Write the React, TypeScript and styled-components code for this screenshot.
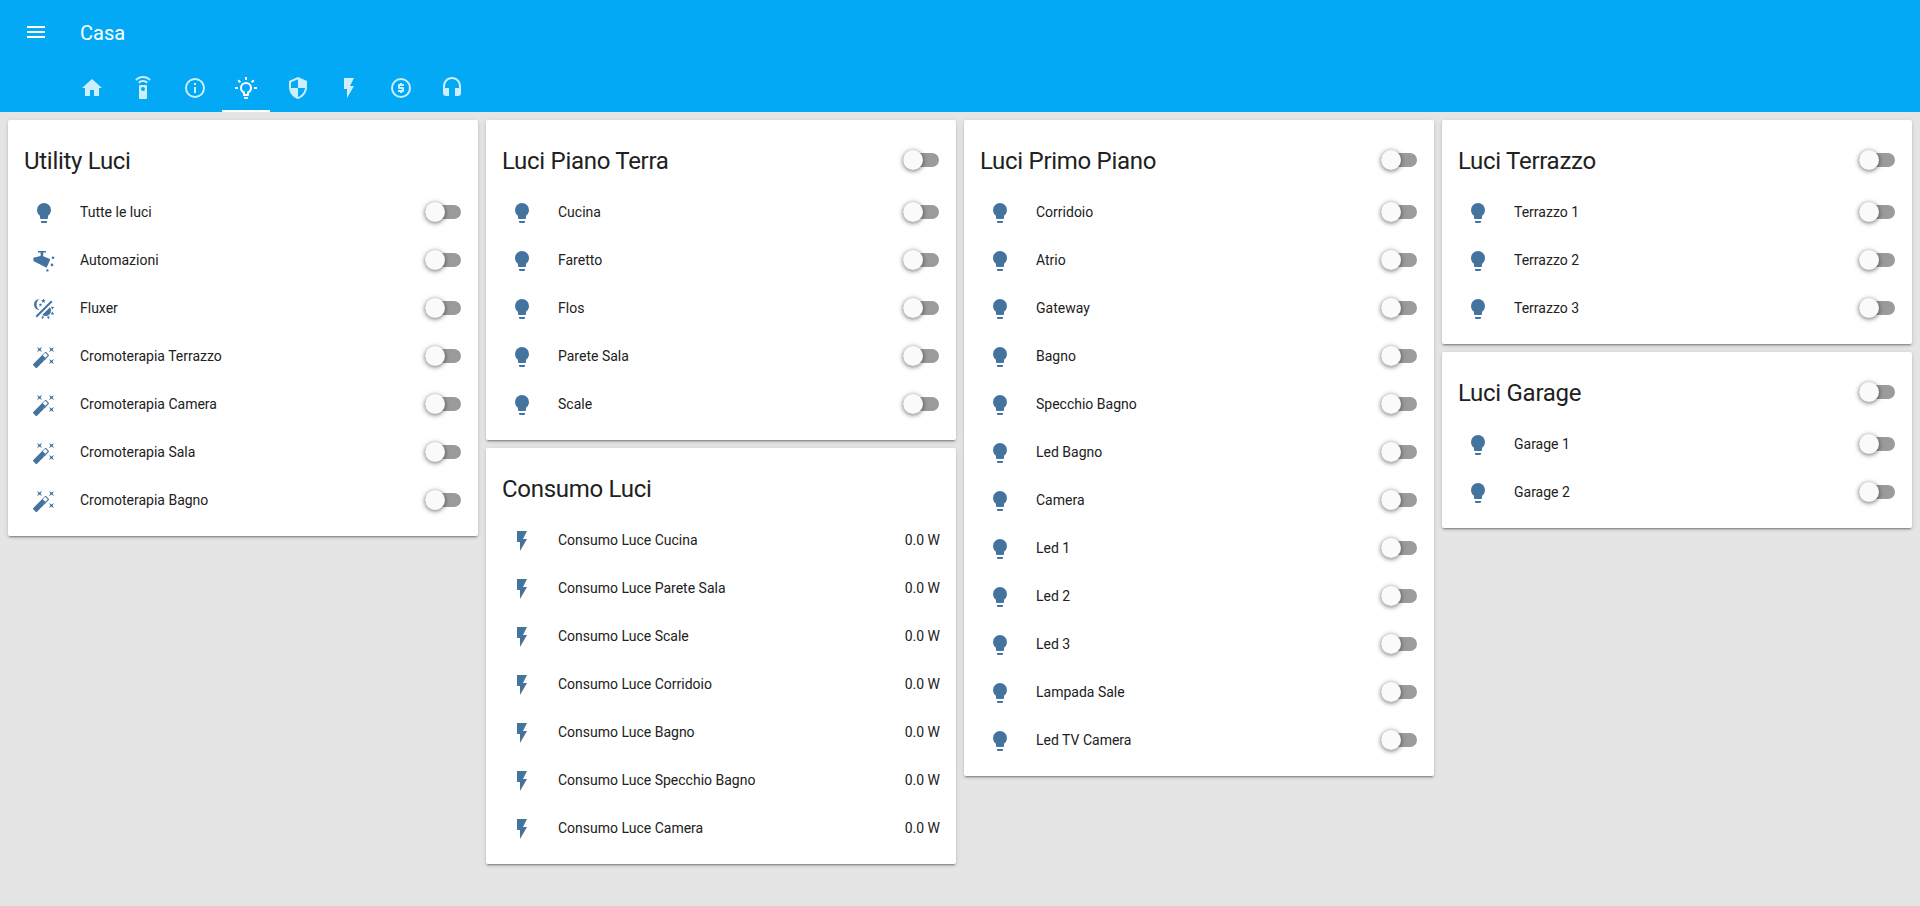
import React from "react";
import styled, { createGlobalStyle } from "styled-components";

const ICONS = {
    menu: "M3,6H21V8H3V6M3,11H21V13H3V11M3,16H21V18H3V16Z",
    home: "M10,20V14H14V20H19V12H22L12,3L2,12H5V20H10Z",
    remote: "M12,0C8.96,0 6.21,1.23 4.22,3.22L5.63,4.63C7.26,3 9.5,2 12,2C14.5,2 16.74,3 18.36,4.64L19.77,3.23C17.79,1.23 15.04,0 12,0M7.05,6.05L8.46,7.46C9.37,6.56 10.62,6 12,6C13.38,6 14.63,6.56 15.54,7.46L16.95,6.05C15.68,4.78 13.93,4 12,4C10.07,4 8.32,4.78 7.05,6.05M12,15A2,2 0 0,1 10,13A2,2 0 0,1 12,11A2,2 0 0,1 14,13A2,2 0 0,1 12,15M15,9H9A1,1 0 0,0 8,10V22A1,1 0 0,0 9,23H15A1,1 0 0,0 16,22V10A1,1 0 0,0 15,9Z",
    info: "M11,9H13V7H11M12,20C7.59,20 4,16.41 4,12C4,7.59 7.59,4 12,4C16.41,4 20,7.59 20,12C20,16.41 16.41,20 12,20M12,2A10,10 0 0,0 2,12A10,10 0 0,0 12,22A10,10 0 0,0 22,12A10,10 0 0,0 12,2M11,17H13V11H11V17Z",
    bulbOn: "M20,11H23V13H20V11M1,11H4V13H1V11M13,1V4H11V1H13M4.92,3.5L7.05,5.64L5.63,7.05L3.5,4.93L4.92,3.5M16.95,5.63L19.07,3.5L20.5,4.93L18.37,7.05L16.95,5.63M12,6A6,6 0 0,1 18,12C18,14.22 16.79,16.16 15,17.2V19A1,1 0 0,1 14,20H10A1,1 0 0,1 9,19V17.2C7.21,16.16 6,14.22 6,12A6,6 0 0,1 12,6M14,21V22A1,1 0 0,1 13,23H11A1,1 0 0,1 10,22V21H14M11,18H13V15.87C14.73,15.43 16,13.86 16,12A4,4 0 0,0 12,8A4,4 0 0,0 8,12C8,13.86 9.27,15.43 11,15.87V18Z",
    shield: "M12,12H19C18.47,16.11 15.72,19.78 12,20.92V12H5V6.3L12,3.19M12,1L3,5V11C3,16.55 6.84,21.73 12,23C17.16,21.73 21,16.55 21,11V5L12,1Z",
    flash: "M7,2V13H10V22L17,10H13L17,2H7Z",
    coin: "M12,20A8,8 0 0,1 4,12A8,8 0 0,1 12,4A8,8 0 0,1 20,12A8,8 0 0,1 12,20M12,2A10,10 0 0,0 2,12A10,10 0 0,0 12,22A10,10 0 0,0 22,12A10,10 0 0,0 12,2M11,17V16H9V14H13V13H10A1,1 0 0,1 9,12V9A1,1 0 0,1 10,8H11V7H13V8H15V10H11V11H14A1,1 0 0,1 15,12V15A1,1 0 0,1 14,16H13V17H11Z",
    headphones: "M12,1C7,1 3,5 3,10V17A3,3 0 0,0 6,20H9V12H5V10A7,7 0 0,1 12,3A7,7 0 0,1 19,10V12H15V20H18A3,3 0 0,0 21,17V10C21,5 17,1 12,1Z",
    bulb: "M12,2A7,7 0 0,0 5,9C5,11.38 6.19,13.47 8,14.74V17A1,1 0 0,0 9,18H15A1,1 0 0,0 16,17V14.74C17.81,13.47 19,11.38 19,9A7,7 0 0,0 12,2M9,21A1,1 0 0,0 10,22H14A1,1 0 0,0 15,21V20H9V21Z",
    wand: "M7.5,5.6L5,7L6.4,4.5L5,2L7.5,3.4L10,2L8.6,4.5L10,7L7.5,5.6M19.5,15.4L22,14L20.6,16.5L22,19L19.5,17.6L17,19L18.4,16.5L17,14L19.5,15.4M22,2L20.6,4.5L22,7L19.5,5.6L17,7L18.4,4.5L17,2L19.5,3.4L22,2M13.34,12.78L15.78,10.34L13.22,7.78L10.78,10.22L13.34,12.78M14.37,7.29L16.71,9.63C17.1,10 17.1,10.65 16.71,11.04L5.04,22.71C4.65,23.1 4,23.1 3.63,22.71L1.29,20.37C0.9,20 0.9,19.35 1.29,18.96L12.96,7.29C13.35,6.9 14,6.9 14.37,7.29Z",
    spot: "M6,2H14V3.6H11.2V7.2L18.4,10.2L14.6,18.8L1.4,12V8.7L8.6,6.9V3.6H6ZM21,7.4A1.3,1.3 0 1,1 21,10A1.3,1.3 0 1,1 21,7.4M20,14.6A1.3,1.3 0 1,1 20,17.2A1.3,1.3 0 1,1 20,14.6M15.4,20.2A1.2,1.2 0 1,1 15.4,22.6A1.2,1.2 0 1,1 15.4,20.2Z",
    flux: "M7.5,2C5.71,3.15 4.5,5.18 4.5,7.5C4.5,9.82 5.71,11.85 7.53,13C4.46,13 2,10.54 2,7.5A5.5,5.5 0 0,1 7.5,2M19.07,3.5L20.5,4.93L4.93,20.5L3.5,19.07L19.07,3.5M12.89,5.93L11.41,5L9.97,6L10.39,4.3L9,3.24L10.75,3.12L11.33,1.47L12,3.1L13.73,3.13L12.38,4.26L12.89,5.93M9.59,9.54L8.43,8.81L7.31,9.59L7.65,8.27L6.56,7.44L7.92,7.35L8.37,6.06L8.88,7.33L10.24,7.36L9.19,8.23L9.59,9.54M19,13.5A5.5,5.5 0 0,1 13.5,19C12.28,19 11.15,18.6 10.24,17.93L17.93,10.24C18.6,11.15 19,12.28 19,13.5M14.6,20.08L17.37,18.93L17.13,22.28L14.6,20.08M18.93,17.38L20.08,14.61L22.28,17.15L18.93,17.38M20.08,12.42L18.94,9.64L22.28,9.88L20.08,12.42M9.63,18.93L12.4,20.08L9.87,22.27L9.63,18.93Z",
};

type IconName = keyof typeof ICONS;

const TABS: IconName[] = ["home", "remote", "info", "bulbOn", "shield", "flash", "coin", "headphones"];

type Row = { name: string; icon: IconName; value?: string };

const lights = (names: string[]): Row[] => names.map((name) => ({ name, icon: "bulb" }));

const COLUMNS: { title: string; master?: boolean; rows: Row[] }[][] = [
    [
        {
            title: "Utility Luci",
            rows: [
                { name: "Tutte le luci", icon: "bulb" },
                { name: "Automazioni", icon: "spot" },
                { name: "Fluxer", icon: "flux" },
                { name: "Cromoterapia Terrazzo", icon: "wand" },
                { name: "Cromoterapia Camera", icon: "wand" },
                { name: "Cromoterapia Sala", icon: "wand" },
                { name: "Cromoterapia Bagno", icon: "wand" },
            ],
        },
    ],
    [
        { title: "Luci Piano Terra", master: true, rows: lights(["Cucina", "Faretto", "Flos", "Parete Sala", "Scale"]) },
        {
            title: "Consumo Luci",
            rows: [
                "Consumo Luce Cucina",
                "Consumo Luce Parete Sala",
                "Consumo Luce Scale",
                "Consumo Luce Corridoio",
                "Consumo Luce Bagno",
                "Consumo Luce Specchio Bagno",
                "Consumo Luce Camera",
            ].map((name) => ({ name, icon: "flash" as IconName, value: "0.0 W" })),
        },
    ],
    [
        {
            title: "Luci Primo Piano",
            master: true,
            rows: lights([
                "Corridoio",
                "Atrio",
                "Gateway",
                "Bagno",
                "Specchio Bagno",
                "Led Bagno",
                "Camera",
                "Led 1",
                "Led 2",
                "Led 3",
                "Lampada Sale",
                "Led TV Camera",
            ]),
        },
    ],
    [
        { title: "Luci Terrazzo", master: true, rows: lights(["Terrazzo 1", "Terrazzo 2", "Terrazzo 3"]) },
        { title: "Luci Garage", master: true, rows: lights(["Garage 1", "Garage 2"]) },
    ],
];

const Icon = ({ name, className }: { name: IconName; className?: string }) => (
    <svg className={className} viewBox="0 0 24 24" fill="currentColor">
        <path d={ICONS[name]} />
    </svg>
);

export default function App() {
    return (
        <>
            <GlobalStyle />
            <Header>
                <Toolbar>
                    <MenuIcon name="menu" />
                    <Title>Casa</Title>
                </Toolbar>
                <Tabs>
                    {TABS.map((tab) => (
                        <Tab key={tab} $active={tab === "bulbOn"}>
                            <TabIcon name={tab} />
                        </Tab>
                    ))}
                </Tabs>
            </Header>
            <Columns>
                {COLUMNS.map((cards, i) => (
                    <Column key={i}>
                        {cards.map((card) => (
                            <Card key={card.title}>
                                <CardHeader>
                                    <CardTitle>{card.title}</CardTitle>
                                    {card.master && <Toggle />}
                                </CardHeader>
                                {card.rows.map((row) => (
                                    <EntityRow key={row.name}>
                                        <RowIcon name={row.icon} />
                                        <RowName>{row.name}</RowName>
                                        {row.value ? <span>{row.value}</span> : <Toggle />}
                                    </EntityRow>
                                ))}
                            </Card>
                        ))}
                    </Column>
                ))}
            </Columns>
        </>
    );
}

const GlobalStyle = createGlobalStyle`
    html, body {
        margin: 0;
        min-height: 906px;
        background: #e5e5e5;
        font-family: Roboto, sans-serif;
        color: #212121;
    }
`;

const Header = styled.header`
    background: #03a9f4;
    height: 112px;
    color: #fff;
`;

const Toolbar = styled.div`
    height: 64px;
    display: flex;
    align-items: center;
    padding: 0 24px;
    box-sizing: border-box;
`;

const MenuIcon = styled(Icon)`
    width: 24px;
    height: 24px;
`;

const Title = styled.div`
    margin-left: 32px;
    padding-top: 2px;
    font-size: 20px;
`;

const Tabs = styled.div`
    height: 48px;
    display: flex;
    padding-left: 66.3px;
`;

const Tab = styled.div<{ $active: boolean }>`
    position: relative;
    width: 51.43px;
    height: 48px;
    display: flex;
    align-items: center;
    justify-content: center;
    color: ${(p) => (p.$active ? "#fff" : "rgba(255, 255, 255, 0.8)")};

    &::after {
        content: "";
        display: ${(p) => (p.$active ? "block" : "none")};
        position: absolute;
        left: 1.7px;
        bottom: 0;
        width: 48px;
        height: 2px;
        background: #fff;
    }
`;

const TabIcon = styled(Icon)`
    width: 24px;
    height: 24px;
`;

const Columns = styled.main`
    display: grid;
    grid-template-columns: repeat(4, 1fr);
    padding: 4px;
    align-items: start;
`;

const Column = styled.div`
    display: flex;
    flex-direction: column;
`;

const Card = styled.section`
    margin: 4px;
    padding-bottom: 12px;
    background: #fff;
    border-radius: 2px;
    box-shadow: 0 2px 2px 0 rgba(0, 0, 0, 0.14), 0 1px 5px 0 rgba(0, 0, 0, 0.12), 0 3px 1px -2px rgba(0, 0, 0, 0.2);
`;

const CardHeader = styled.div`
    height: 32px;
    padding: 24px 16px 12px;
    display: flex;
    align-items: center;
    justify-content: space-between;
`;

const CardTitle = styled.div`
    padding-top: 2px;
    font-size: 24px;
    line-height: 32px;
    letter-spacing: -0.012em;
`;

const EntityRow = styled.div`
    height: 48px;
    padding: 0 16px;
    display: flex;
    align-items: center;
    font-size: 14px;
`;

const RowIcon = styled(Icon)`
    width: 24px;
    height: 24px;
    margin: 2px 8px 0;
    color: #44739e;
`;

const RowName = styled.div`
    flex: 1;
    margin-left: 16px;
`;

const Toggle = styled.div`
    position: relative;
    width: 36px;
    height: 14px;
    margin-right: 1px;
    border-radius: 8px;
    background: #9b9b9b;

    &::after {
        content: "";
        position: absolute;
        left: 0;
        top: -3px;
        width: 20px;
        height: 20px;
        border-radius: 50%;
        background: #fafafa;
        box-shadow: 0 1px 5px 0 rgba(0, 0, 0, 0.6);
    }
`;
